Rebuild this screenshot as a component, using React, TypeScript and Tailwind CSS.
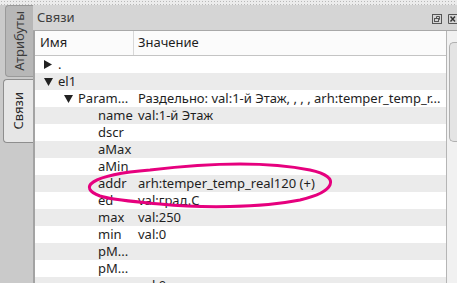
import React from 'react'

type Row = { level: number; arrow?: 'right' | 'down'; name: string; value: string }

const rows: Row[] = [
  { level: 0, arrow: 'right', name: '.', value: '' },
  { level: 0, arrow: 'down', name: 'el1', value: '' },
  { level: 1, arrow: 'down', name: 'Param...', value: 'Раздельно: val:1-й Этаж, , , , arh:temper_temp_r...' },
  { level: 2, name: 'name', value: 'val:1-й Этаж' },
  { level: 2, name: 'dscr', value: '' },
  { level: 2, name: 'aMax', value: '' },
  { level: 2, name: 'aMin', value: '' },
  { level: 2, name: 'addr', value: 'arh:temper_temp_real120 (+)' },
  { level: 2, name: 'ed', value: 'val:град.С' },
  { level: 2, name: 'max', value: 'val:250' },
  { level: 2, name: 'min', value: 'val:0' },
  { level: 2, name: 'pM...', value: '' },
  { level: 2, name: 'pM...', value: '' },
  { level: 2, name: '', value: 'val:0' },
]

const indent = ['pl-[9px]', 'pl-[29px]', 'pl-[49px]']

const Arrow = ({ dir }: { dir?: 'right' | 'down' }) => (
  <span className="w-[14px] shrink-0 flex items-center">
    {dir === 'right' && (
      <svg width="8" height="9" viewBox="0 0 8 9">
        <path d="M0 0 L8 4.5 L0 9 Z" fill="#222" />
      </svg>
    )}
    {dir === 'down' && (
      <svg width="9" height="8" viewBox="0 0 9 8">
        <path d="M0 0 L9 0 L4.5 8 Z" fill="#222" />
      </svg>
    )}
  </span>
)

export default function App() {
  return (
    <div className="relative w-[472px] h-[294px] bg-white overflow-hidden font-['Noto_Sans',sans-serif] text-[13px] text-[#1e1e1e]">
      <div className="w-[457px] h-[283px] flex flex-col bg-[#cacaca]">
        <div className="h-[5px] shrink-0 bg-[#ececec] bg-[radial-gradient(circle,#b8b8b8_0.7px,transparent_0.9px)] bg-[length:3px_3px]" />
        <div className="flex flex-1 min-h-0">
          {/* vertical tabs */}
          <div className="w-[33px] shrink-0 flex flex-col items-end">
            <div className="w-[28px] h-[72px] bg-[#b7b7b7] border border-r-0 border-[#9a9a9a] rounded-l-[4px] flex items-center justify-center">
              <span className="[writing-mode:vertical-rl] rotate-180 text-[#3c3c3c] text-[13px] leading-none">Атрибуты</span>
            </div>
            <div className="mt-[2px] w-[30px] h-[64px] bg-[#e6e6e6] border border-r-0 border-[#8e8e8e] rounded-l-[4px] flex items-center justify-center">
              <span className="[writing-mode:vertical-rl] rotate-180 text-[#2a2a2a] text-[13px] leading-none">Связи</span>
            </div>
          </div>

          {/* dock panel */}
          <div className="flex-1 flex flex-col min-w-0">
            <div className="h-[26px] shrink-0 bg-[#d5d5d5] border-b border-[#a8a8a8] flex items-center pl-[4px]">
              <span className="text-[13px] text-[#404040]">Связи</span>
              <div className="ml-auto flex items-center gap-[6px] mt-[2px]">
                <svg width="10" height="10" viewBox="0 0 10 10">
                  <rect x="0.5" y="0.5" width="9" height="9" fill="none" stroke="#555" />
                  <rect x="2.5" y="4.5" width="4" height="3" fill="none" stroke="#555" />
                  <path d="M4.5 4.5 V2.5 H7.5 V5.5 H6.5" fill="none" stroke="#555" />
                </svg>
                <svg width="9" height="10" viewBox="0 0 9 10">
                  <path d="M0.5 0.5 H9 M0.5 0.5 V9.5 H9" fill="none" stroke="#555" />
                  <path d="M2.5 2.5 L7 7.5 M7 2.5 L2.5 7.5" stroke="#333" strokeWidth="1.4" />
                </svg>
              </div>
            </div>

            <div className="flex flex-1 min-h-0">
              <div className="flex-1 flex flex-col min-w-0 bg-white border-l-2 border-[#a3a3a3] border-r border-r-[#b5b5b5] overflow-hidden">
                <div className="h-[25px] shrink-0 flex items-center bg-[#fbfbfb] border-b border-[#c4c4c4]">
                  <div className="w-[99px] shrink-0 pl-[5px] h-full flex items-center border-r border-[#d8d8d8]">Имя</div>
                  <div className="pl-[4px] flex items-center">Значение</div>
                </div>
                {rows.map((r, i) => (
                  <div
                    key={i}
                    className={`h-[17px] shrink-0 flex items-center whitespace-nowrap ${i % 2 === 1 ? 'bg-[#ebebeb]' : 'bg-white'}`}
                  >
                    <div className={`w-[99px] shrink-0 flex items-center ${indent[r.level]}`}>
                      <Arrow dir={r.arrow} />
                      <span>{r.name}</span>
                    </div>
                    <div className="pl-[4px]">{r.value}</div>
                  </div>
                ))}
              </div>
              <div className="w-[10px] shrink-0 bg-[#f1f1f1] pt-[11px] pl-[2px]">
                <div className="h-[100px] bg-[#e4e4e4] border border-r-0 border-[#b0b0b0] rounded-tl-[5px] rounded-bl-[5px]" />
              </div>
            </div>
          </div>
        </div>
      </div>

      {/* hand-drawn highlight */}
      <svg className="absolute left-0 top-0 pointer-events-none" width="472" height="294" viewBox="0 0 472 294">
        <path
          d="M100 196 C78 188 88 175 150 170 C200 164 260 160 310 170 C343 177 334 192 300 200 C260 208 200 208 160 204 C130 201 112 200 100 196 Z"
          fill="none"
          stroke="#e6007e"
          strokeWidth="3"
        />
      </svg>
    </div>
  )
}
